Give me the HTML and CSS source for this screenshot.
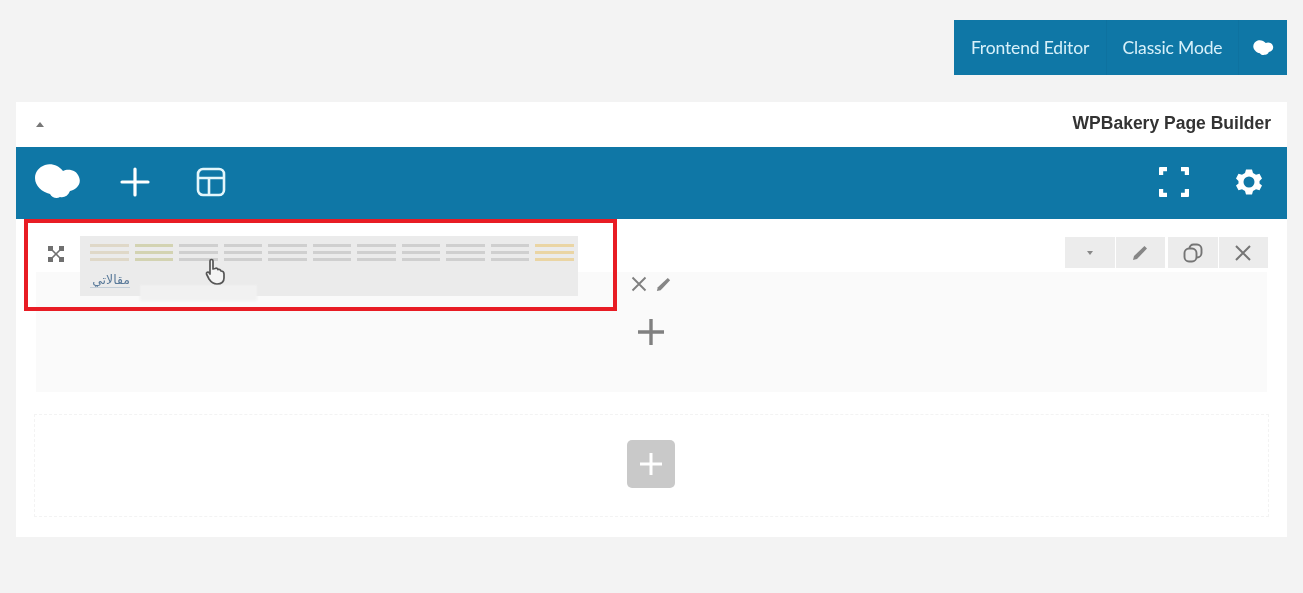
FILE: index.html
```html
<!DOCTYPE html>
<html lang="en">
<head>
  <meta charset="UTF-8" />
  <title>WPBakery Page Builder</title>
  <link rel="stylesheet" href="styles.css">
</head>
<body>

  <!-- Mode switch -->
  <div class="mode-bar">
    <div class="mode-btn mode-frontend"><span>Frontend Editor</span></div>
    <div class="mode-btn mode-classic"><span>Classic Mode</span></div>
    <div class="mode-btn mode-logo">
      <svg width="21" height="16" viewBox="0 0 46 36"><path class="cloud" d="M10 1C17-1 24 2 28 7C33 4 42 6 44 13C47 20 41 26 35 27C33 32 29 34 25 33C22 35 17 34 15 30C7 28 0 22 0 14C0 8 4 3 10 1Z"/></svg>
    </div>
  </div>

  <div class="panel">
    <div class="panel-head">
      <span class="caret-up"></span>
      <span class="panel-title">WPBakery Page Builder</span>
    </div>

    <!-- Blue toolbar -->
    <div class="toolbar">
      <svg class="tool-logo" width="46" height="36" viewBox="0 0 46 36"><path class="cloud" d="M10 1C17-1 24 2 28 7C33 4 42 6 44 13C47 20 41 26 35 27C33 32 29 34 25 33C22 35 17 34 15 30C7 28 0 22 0 14C0 8 4 3 10 1Z"/></svg>
      <svg class="tool-plus" width="30" height="30" viewBox="0 0 30 30"><path d="M15 2V28M2 15H28" stroke="#fff" stroke-width="3.2" stroke-linecap="round"/></svg>
      <svg class="tool-layout" width="30" height="30" viewBox="0 0 30 30" fill="none" stroke="#e4f6fb" stroke-width="2.6"><rect x="2" y="2" width="26" height="26" rx="5"/><path d="M2 11H28M13 11V28"/></svg>
      <div class="tool-spacer"></div>
      <svg class="tool-full" width="30" height="30" viewBox="0 0 30 30" fill="none" stroke="#fff" stroke-width="4.400" stroke-linejoin="round"><path d="M2 8V2H8M22 2H28V8M28 22V28H22M8 28H2V22"/></svg>
      <svg class="tool-gear" width="26" height="26" viewBox="0 0 26 26"><path fill="#fff" fill-rule="evenodd" d="M10 0.500H16L17 4L20 5.700L23.500 4.700L26 9.500L23.500 12V14.500L26 16.500L23.500 21.300L20 20.300L17 22L16 25.500H10L9 22L6 20.300L2.500 21.300L0 16.500L2.500 14.500V12L0 9.500L2.500 4.700L6 5.700L9 4ZM13 7.500A5.500 5.500 0 1 0 13 18.500A5.500 5.500 0 1 0 13 7.500Z"/></svg>
    </div>

    <div class="canvas">
      <div class="row">
        <div class="row-head">
          <svg class="row-move" width="18" height="18" viewBox="0 0 18 18"><g fill="#707070"><rect x="1" y="1" width="5" height="5"/><rect x="12" y="1" width="5" height="5"/><rect x="1" y="12" width="5" height="5"/><rect x="12" y="12" width="5" height="5"/></g><path d="M4 4L14 14M14 4L4 14" stroke="#707070" stroke-width="1.600"/></svg>

          <div class="elements">
            <div class="el-cols">
              <div class="el-col el-orange"></div>
              <div class="el-col el-green"></div>
              <div class="el-col"></div>
              <div class="el-col"></div>
              <div class="el-col"></div>
              <div class="el-col"></div>
              <div class="el-col"></div>
              <div class="el-col"></div>
              <div class="el-col"></div>
              <div class="el-col"></div>
              <div class="el-col el-yellow"></div>
            </div>
            <div class="el-label" lang="ar" dir="rtl">مقالاتي</div>
          </div>

          <div class="row-actions">
            <div class="act-btn"><span class="caret-down"></span></div>
            <div class="act-btn">
              <svg width="18" height="18" viewBox="0 0 18 18"><path fill="#868686" d="M13.500 2L16 4.500L6 15L2 16L3 12Z"/></svg>
            </div>
            <div class="act-btn act-copy">
              <svg width="20" height="20" viewBox="0 0 20 20" fill="none" stroke="#757575" stroke-width="1.900"><rect x="1.500" y="5.500" width="12" height="13" rx="4.500"/><path d="M6.500 5.500A4 4 0 0 1 10.500 1.500H14A4.500 4.500 0 0 1 18.500 6V10A4.500 4.500 0 0 1 14 14.500H13.500"/></svg>
            </div>
            <div class="act-btn">
              <svg width="18" height="18" viewBox="0 0 18 18"><path d="M2 2L16 16M16 2L2 16" stroke="#757575" stroke-width="2"/></svg>
            </div>
          </div>
        </div>

        <div class="row-body">
          <div class="col-controls">
            <svg width="16" height="16" viewBox="0 0 16 16"><path d="M1.500 1.500L14.500 14.500M14.500 1.500L1.500 14.500" stroke="#808080" stroke-width="1.900"/></svg>
            <svg width="17" height="17" viewBox="0 0 18 18"><path fill="#868686" d="M13.500 2L16 4.500L6 15L2 16L3 12Z"/></svg>
          </div>
          <svg class="col-plus" width="28" height="28" viewBox="0 0 28 28"><path d="M14 1V27M1 14H27" stroke="#808080" stroke-width="3.400"/></svg>
        </div>
      </div>

      <div class="add-zone">
        <div class="add-btn">
          <svg width="24" height="24" viewBox="0 0 24 24"><path d="M12 1V23M1 12H23" stroke="#fff" stroke-width="3"/></svg>
        </div>
      </div>
    </div>

    <!-- Things on top of the builder -->
    <div class="tooltip"></div>
    <div class="highlight"></div>
    <svg class="hand" width="20" height="27" viewBox="0 0 20 27"><path fill="#f4f4f4" stroke="#555" stroke-width="1.700" stroke-linejoin="round" d="M5 3C5 1 8 1 8 3V11L10 10.500C11 10 12.500 10.500 13 11.500C14 11 15.500 11.500 16 13C17.500 13 19 14 19 16V20C19 24 16 26 12 26C8 26 6 24 4 21L1.500 16C1 14.500 3 13.500 4 14.500L5 16Z"/></svg>
  </div>

</body>
</html>
```
FILE: styles.css
```css
* {
  margin: 0;
  padding: 0;
  box-sizing: border-box;
}

body {
  background-color: #f3f3f3;
  font-family: 'Liberation Sans', sans-serif;
  padding: 20px 16px 0;
  height: 593px;
  overflow: hidden;
}

.cloud {
  fill: #fff;
}

/* Mode switch */
.mode-bar {
  display: flex;
  justify-content: flex-end;
  height: 55px;
}

.mode-btn {
  display: flex;
  align-items: center;
  justify-content: center;
  background-color: #0f77a6;
  color: #d8f1fa;
  font-family: 'Lato', sans-serif;
  font-size: 17.500px;
  letter-spacing: -0.15px;
}

.mode-btn span,
.mode-btn svg {
  filter: blur(0.5px);
}

.mode-frontend { width: 152px; }
.mode-classic { width: 132px; border-left: 1px solid #0e72a0; }
.mode-logo { width: 49px; border-left: 1px solid #0e72a0; }

/* Panel */
.panel {
  position: relative;
  margin-top: 27px;
  background-color: #fff;
  height: 435px;
}

.panel-head {
  display: flex;
  align-items: center;
  justify-content: space-between;
  height: 45px;
  padding: 0 16px 2px 20px;
}

.panel-title {
  font-size: 17.500px;
  font-weight: 700;
  color: #333;
  filter: blur(0.5px);
}

.caret-up {
  width: 0;
  height: 0;
  margin-top: 2px;
  border-left: 4px solid transparent;
  border-right: 4px solid transparent;
  border-bottom: 5px solid #777;
}

.caret-down {
  width: 0;
  height: 0;
  border-left: 3.500px solid transparent;
  border-right: 3.500px solid transparent;
  border-top: 4px solid #888;
}

/* Toolbar */
.toolbar {
  display: flex;
  align-items: center;
  height: 72px;
  padding: 0 25px 2px 19px;
  background-color: #0f77a6;
}

.toolbar svg {
  filter: blur(0.4px);
}

.tool-plus { margin-left: 39px; }
.tool-layout { margin-left: 46px; }
.tool-spacer { flex: 1; }
.tool-gear { margin-left: 47px; }

/* Canvas */
.canvas {
  padding: 17px 20px 20px;
}

.row-head {
  display: flex;
  height: 36px;
  background-color: #fff;
}

.row-head svg,
.row-body svg {
  filter: blur(0.4px);
}

.row-move {
  margin: 9px 15px 0 11px;
  flex-shrink: 0;
}

.elements {
  position: relative;
  z-index: 1;
  width: 498px;
  height: 60px;
  flex-shrink: 0;
  padding: 8px 0 0 10px;
  background-color: #ebebeb;
}

.el-cols {
  display: flex;
  gap: 6px;
}

.el-col {
  width: 38.500px;
  height: 18px;
  background: repeating-linear-gradient(to bottom, #cfcfcf 0, #cfcfcf 3px, transparent 3px, transparent 7px);
  filter: blur(0.7px);
}

.el-orange {
  background: repeating-linear-gradient(to bottom, #dfd8c8 0, #dfd8c8 3px, transparent 3px, transparent 7px);
}

.el-green {
  background: repeating-linear-gradient(to bottom, #d3d3b2 0, #d3d3b2 3px, transparent 3px, transparent 7px);
}

.el-yellow {
  background: repeating-linear-gradient(to bottom, #ead5a4 0, #ead5a4 3px, transparent 3px, transparent 7px);
}

.el-label {
  width: 40px;
  margin-top: 11px;
  font-family: 'DejaVu Sans', sans-serif;
  font-size: 12.500px;
  line-height: 14px;
  color: #5a7a9a;
  border-bottom: 1px solid #c3ced8;
  filter: blur(0.5px);
}

.row-actions {
  display: flex;
  gap: 1px;
  margin-left: auto;
  margin-right: -1px;
  padding-top: 1px;
}

.act-btn {
  display: flex;
  align-items: center;
  justify-content: center;
  width: 49.500px;
  height: 31px;
  background-color: #ececec;
}

.act-copy {
  margin-left: 2px;
}

.row-body {
  display: flex;
  flex-direction: column;
  align-items: center;
  height: 120px;
  padding: 4px 1px 0 0;
  background-color: #fafafa;
}

.col-controls {
  display: flex;
  align-items: center;
  gap: 8px;
  height: 16px;
}

.col-plus {
  margin-top: 26px;
}

/* Add element */
.add-zone {
  display: flex;
  align-items: center;
  justify-content: center;
  height: 103px;
  margin: 22px -2px 0;
  padding: 0 1px 3px 0;
  border: 1px dashed #f3f3f3;
}

.add-btn {
  display: flex;
  align-items: center;
  justify-content: center;
  width: 48px;
  height: 48px;
  border-radius: 5px;
  background-color: #c9c9c9;
}

/* Overlays */
.highlight {
  position: absolute;
  z-index: 2;
  left: 8px;
  top: 117px;
  width: 593px;
  height: 92px;
  border: 4px solid #e81c24;
}

.tooltip {
  position: absolute;
  z-index: 1;
  left: 124px;
  top: 183px;
  width: 117px;
  height: 16px;
  background-color: #f1f1f1;
  filter: blur(1px);
}

.hand {
  position: absolute;
  z-index: 3;
  left: 189px;
  top: 156px;
}
```
